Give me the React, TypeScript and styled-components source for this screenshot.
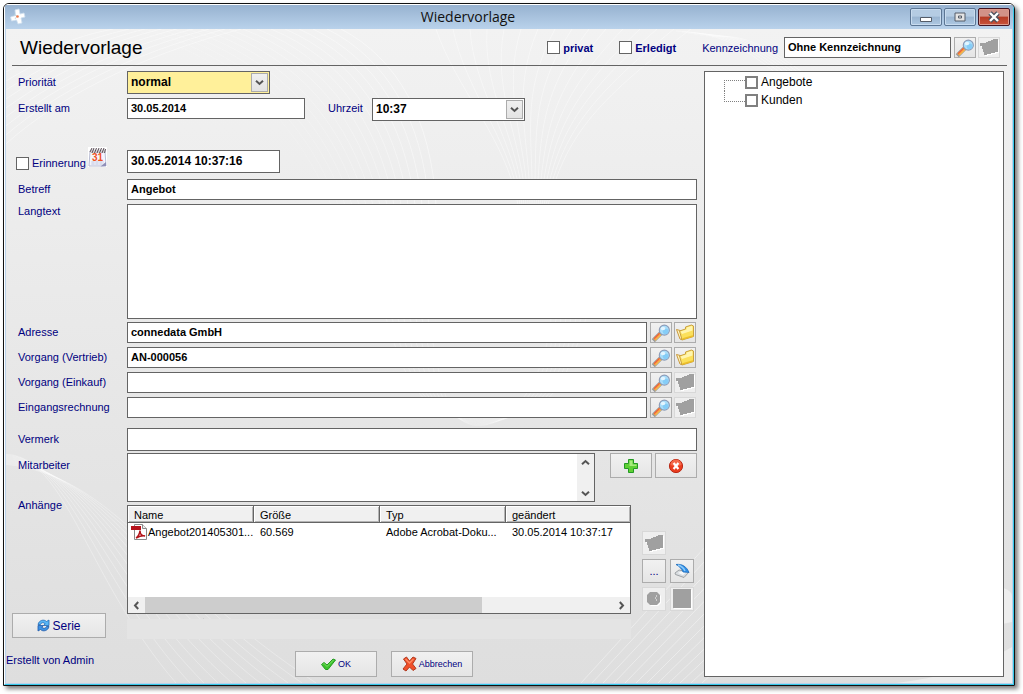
import React from "react";
import styled, { createGlobalStyle, css } from "styled-components";

const navy = "#000080";
const frame = "#646464";

const GlobalStyle = createGlobalStyle`
  * { box-sizing: border-box; }
  body {
    margin: 0;
    background: #fff;
    font-family: "Liberation Sans", Arial, sans-serif;
    font-size: 11px;
    line-height: 14px;
    color: ${navy};
  }
  button, input, select, textarea { font: inherit; color: inherit; margin: 0; }
`;

/* ---------- window frame ---------- */

const Desktop = styled.div`
  min-height: 100vh;
  padding: 3px 8px 8px 3px;
  display: flex;
`;

const WindowFrame = styled.main`
  flex: 1;
  display: flex;
  border: 1px solid #111;
  border-radius: 6px 6px 0 0;
  box-shadow: 3px 3px 4px rgba(0, 0, 0, 0.5);
  overflow: hidden;
`;

const InnerFrame = styled.div`
  flex: 1;
  min-width: 0;
  display: flex;
  flex-direction: column;
  border: 1px solid;
  border-color: #fff #35c8e8 #35c8e8 #fff;
`;

const TitleBar = styled.header`
  height: 24px;
  display: flex;
  align-items: center;
  gap: 2px;
  padding: 0 3px 0 4px;
  background: linear-gradient(#97b2d0, #b9d2eb);
`;

const WindowTitle = styled.div`
  flex: 1;
  text-align: center;
  font-family: "Open Sans", "Noto Sans", sans-serif;
  font-size: 14px;
  line-height: 20px;
  color: #111;
`;

const CaptionButton = styled.button<{ $close?: boolean }>`
  width: 32px;
  height: 18px;
  padding: 0;
  display: flex;
  align-items: center;
  justify-content: center;
  border: 1px solid ${(p) => (p.$close ? "#431422" : "#5c7694")};
  border-radius: 2px;
  box-shadow: inset 0 0 0 1px ${(p) => (p.$close ? "#dd9a8c" : "#c9dcef")};
  background: ${(p) =>
    p.$close
      ? "linear-gradient(#d29187 0 45%, #b53a24 50%, #c9543c)"
      : "linear-gradient(#b5cce3 0 45%, #9ab5d1 50%, #aec8e2)"};
`;

const Client = styled.div`
  flex: 1;
  position: relative;
  display: flex;
  flex-direction: column;
  border: 1px solid #b9d2eb;
  border-top: 0;
  background: linear-gradient(#f2f2f2, #ebebeb 35%, #dedede);
`;

const Backdrop = styled.svg`
  position: absolute;
  inset: 0;
  width: 100%;
  height: 100%;
`;

/* ---------- header ---------- */

const HeaderBar = styled.div`
  position: relative;
  height: 37px;
  margin: 0 5px 0 6px;
  padding: 1px 7px 0 8px;
  display: flex;
  align-items: center;
  border-bottom: 1px solid ${frame};
`;

const Heading = styled.h1`
  flex: 1;
  margin: 0;
  font-size: 19px;
  line-height: 22px;
  font-weight: normal;
  color: #000;
`;

const CheckLabel = styled.label<{ $bold?: boolean }>`
  display: flex;
  align-items: center;
  gap: 3px;
  font-weight: ${(p) => (p.$bold ? "bold" : "normal")};
`;

const HeaderChecks = styled.div`
  display: flex;
  gap: 26px;
  margin-right: 26px;
`;

const MarkLabel = styled.label`
  margin-right: 6px;
`;

const CheckBox = styled.input<{ $tree?: boolean }>`
  appearance: none;
  flex: none;
  width: 13px;
  height: 13px;
  background: #fff;
  border: ${(p) => (p.$tree ? "2px solid #808080" : `1px solid ${frame}`)};
  &:checked { background: ${navy}; box-shadow: inset 0 0 0 2px #fff; }
`;

/* ---------- form controls ---------- */

const fieldText = css<{ $large?: boolean }>`
  font-size: ${(p) => (p.$large ? "12px" : "11px")};
  font-weight: bold;
  color: #000;
`;

const TextField = styled.input<{ $large?: boolean; $tall?: boolean; $width?: number }>`
  ${fieldText}
  ${(p) => (p.$width ? `width: ${p.$width}px; flex: none;` : "flex: 1; min-width: 0;")}
  height: ${(p) => (p.$tall ? "23px" : "21px")};
  padding: 0 3px 1px;
  background: #fff;
  border: 1px solid ${frame};
  border-radius: 0;
`;

const LongText = styled.textarea`
  ${fieldText}
  flex: 1;
  min-width: 0;
  height: 115px;
  padding: 3px;
  resize: none;
  background: #fff;
  border: 1px solid ${frame};
`;

const SelectBox = styled.div<{ $width: number; $tone?: string }>`
  width: ${(p) => p.$width}px;
  height: 23px;
  display: grid;
  align-items: center;
  background: ${(p) => p.$tone || "#fff"};
  border: 1px solid ${frame};
  select {
    ${fieldText}
    font-size: 12px;
    grid-area: 1 / 1;
    width: 100%;
    height: 21px;
    padding: 0 20px 2px 3px;
    appearance: none;
    background: transparent;
    border: 0;
  }
`;

const DropMark = styled.span`
  grid-area: 1 / 1;
  justify-self: end;
  width: 17px;
  height: 19px;
  margin-right: 1px;
  display: flex;
  align-items: center;
  justify-content: center;
  pointer-events: none;
  border: 1px solid #acacac;
  background: linear-gradient(#f0f0f0, #e3e3e3);
`;

const PushButton = styled.button<{ $w: number; $h: number; $size?: number }>`
  flex: none;
  width: ${(p) => p.$w}px;
  height: ${(p) => p.$h}px;
  padding: 0;
  display: flex;
  align-items: center;
  justify-content: center;
  gap: 2px;
  font-size: ${(p) => p.$size || 11}px;
  color: ${navy};
  border: 1px solid #acacac;
  border-radius: 0;
  background: linear-gradient(#f1f1f1, #e5e5e5);
  &:disabled { border-color: #d8d8d8; background: #efefef; }
`;

/* ---------- form layout ---------- */

const Content = styled.div`
  position: relative;
  flex: 1;
  display: flex;
  gap: 7px;
  padding: 5px 8px 6px 0;
`;

const FormColumn = styled.div`
  flex: 1;
  min-width: 0;
  display: flex;
  flex-direction: column;
`;

const Row = styled.div<{ $gap?: number; $align?: string }>`
  display: flex;
  align-items: ${(p) => p.$align || "center"};
  margin-top: ${(p) => p.$gap || 0}px;
`;

const LabelCell = styled.div`
  flex: none;
  width: 121px;
  padding: 0 0 2px 12px;
  display: flex;
  align-items: center;
`;

const ReminderCell = styled(LabelCell)`
  height: 26px;
  padding: 0 0 0 10px;
  gap: 2px;
  align-items: flex-start;
  > label { margin-top: 9px; }
`;

const TimeLabel = styled.label`
  width: 44px;
  margin-left: 23px;
`;

const TimeRow = styled(Row)`
  align-items: flex-start;
  > ${LabelCell}, > ${TimeLabel} { line-height: 21px; }
`;

const IconPair = styled.div`
  display: flex;
  gap: 2px;
  margin-left: 3px;
`;

const FieldIcons = styled(IconPair)`
  margin-right: 1px;
`;

const LowerArea = styled.div`
  display: flex;
  margin-top: 2px;
`;

const LowerLabels = styled.div`
  flex: none;
  width: 121px;
  padding: 5px 0 1px 6px;
  display: flex;
  flex-direction: column;
  gap: 26px;
  > label, > span { padding-left: 6px; }
  > button { margin-top: auto; }
`;

const LowerFields = styled.div`
  flex: 1;
  min-width: 0;
  display: flex;
  flex-direction: column;
  gap: 3px;
`;

const StaffRow = styled.div`
  display: flex;
  align-items: flex-start;
`;

const StaffBox = styled.div`
  flex: 1;
  min-width: 0;
  height: 49px;
  display: flex;
  background: #fff;
  border: 1px solid ${frame};
  textarea {
    ${fieldText}
    flex: 1;
    min-width: 0;
    padding: 3px;
    border: 0;
    resize: none;
    overflow: hidden;
    background: #fff;
  }
`;

const ScrollColumn = styled.div`
  width: 17px;
  display: flex;
  flex-direction: column;
  justify-content: space-between;
  background: #f0f0f0;
`;

const ScrollButton = styled.button`
  width: 17px;
  height: 16px;
  padding: 0;
  display: flex;
  align-items: center;
  justify-content: center;
  border: 0;
  background: #f0f0f0;
`;

const StaffButtons = styled.div`
  display: flex;
  gap: 3px;
  margin-left: 15px;
`;

const AttachRow = styled.div`
  display: flex;
`;

const AttachColumn = styled.div`
  flex: 1;
  min-width: 0;
  display: flex;
  flex-direction: column;
  gap: 5px;
`;

const AttachBox = styled.div`
  height: 109px;
  display: flex;
  flex-direction: column;
  justify-content: space-between;
  background: #fff;
  border: 1px solid ${frame};
`;

const FileTable = styled.table`
  width: 100%;
  table-layout: fixed;
  border-collapse: separate;
  border-spacing: 0;
  color: #000;
  th {
    width: 126px;
    height: 17px;
    padding: 1px 0 0 6px;
    font-weight: normal;
    text-align: left;
    line-height: 14px;
    background: #f0f0f0;
    border-right: 1px solid ${frame};
    border-bottom: 1px solid ${frame};
    box-shadow: inset 1px 1px 0 #fff, inset -1px -1px 0 #b4b4b4;
  }
  th:last-child { width: auto; border-right: 0; }
  td {
    height: 17px;
    padding: 0 0 0 6px;
    line-height: 16px;
    white-space: nowrap;
  }
  td:first-child { padding-left: 3px; }
`;

const FileName = styled.span`
  display: flex;
  gap: 1px;
`;

const ScrollTrack = styled.div`
  height: 16px;
  display: flex;
  background: #f0f0f0;
`;

const ScrollRail = styled.div`
  flex: 1;
`;

const ScrollThumb = styled.div`
  width: 72%;
  height: 16px;
  background: #cdcdcd;
`;

const StatusStrip = styled.div`
  height: 20px;
  background: #e4e4e4;
`;

const AttachTools = styled.div`
  flex: none;
  width: 66px;
  padding: 26px 3px 0 11px;
  display: grid;
  grid-template-columns: 24px 24px;
  grid-auto-rows: 24px;
  gap: 4px;
  > button:first-child { grid-column: 1 / 3; }
`;

const Footer = styled.div`
  display: flex;
  margin-top: auto;
  gap: 14px;
`;

const CreatedBy = styled.div`
  width: 275px;
  padding-top: 2px;
`;

/* ---------- tree ---------- */

const TreePanel = styled.ul`
  flex: none;
  width: 300px;
  margin: 0;
  padding: 1px 0 0 19px;
  list-style: none;
  background: #fff;
  border: 1px solid ${frame};
  font-size: 12px;
  color: #000;
`;

const TreeItem = styled.li<{ $last?: boolean }>`
  height: 18px;
  display: flex;
  align-items: center;
  &::before {
    content: "";
    width: 20px;
    height: 10px;
    align-self: ${(p) => (p.$last ? "flex-start" : "flex-end")};
    border-left: 1px dotted #808080;
    border-${(p) => (p.$last ? "bottom" : "top")}: 1px dotted #808080;
  }
`;

/* ---------- icons ---------- */

const Magnifier = () => (
  <svg width="20" height="19" viewBox="-1 -1 21 20" aria-hidden="true">
    <path d="M3 16 8.500 10.500" stroke="#9a9a9a" strokeWidth="4.600" strokeLinecap="square" />
    <path d="M2.600 16.600 9 10.200" stroke="#fbc04a" strokeWidth="3.200" />
    <path d="M2.200 15.600 8 9.800" stroke="#f0603a" strokeWidth="1.300" />
    <path d="m3 16.500 5.500-5.500" stroke="#f0603a" strokeWidth=".9" strokeDasharray="1.500 1.500" />
    <path d="m8.800 10.300 1.800-1.800" stroke="#5c5c78" strokeWidth="2.800" />
    <circle cx="13" cy="6.500" r="5.300" fill="#a9defa" stroke="#8d9cb8" strokeWidth="1.200" />
    <circle cx="14.300" cy="7.800" r="3" fill="#86cdf7" />
    <ellipse cx="11.600" cy="4.800" rx="2.400" ry="1.900" fill="#e3f5ff" />
  </svg>
);

const Folder = () => (
  <svg width="20" height="19" viewBox="0 0 20 19" aria-hidden="true">
    <path d="M1.500 6.500 5 16l2 .8V8z" fill="#fff6c4" stroke="#c9983a" />
    <path d="M4.500 8 10.500 6V4l6-2 2 1v10.500L7 17z" fill="#fbe05c" stroke="#c9a040" strokeLinejoin="round" />
    <path d="M5.500 8.500 11.500 6.500V4.500l5-1.500 1 .5v4L7 11z" fill="#fff5b0" />
    <path d="m7.500 16 10.500-3" stroke="#ecbf2a" strokeWidth="1.400" />
  </svg>
);

const folderShape = "M1 5h6V4h2V3h3V2h2V1h5v13h-3v1h-4v1H8v1H5v-3H4v-3H3V8H1z";

const FolderOff = () => (
  <svg width="20" height="19" viewBox="0 0 20 19" aria-hidden="true">
    <path d={folderShape} fill="#fff" transform="translate(1 1)" />
    <path d={folderShape} fill="#a0a0a0" />
  </svg>
);

const Chevron = ({ d = "down" }: { d?: "down" | "up" | "left" | "right" }) => {
  const turn = { down: 0, left: 90, up: 180, right: 270 }[d];
  return (
    <svg width="9" height="9" viewBox="0 0 9 9" aria-hidden="true">
      <path d="M1 2.800 4.500 6 8 2.800" fill="none" stroke="#555" strokeWidth="2" transform={`rotate(${turn} 4.5 4.5)`} />
    </svg>
  );
};

const AppMark = () => (
  <svg width="17" height="18" viewBox="0 0 17 18" aria-hidden="true">
    <path d="m6 2 4-1 1 5 4-1 1 4-4 1 1 5-4 1-1.500-4-5 1-1-4 5-1.500z" fill="#fff" stroke="#cfe0ef" strokeWidth=".8" />
    <path d="M5 6.500 8 8l-2 3" fill="none" stroke="#b8d2dc" strokeWidth=".8" />
    <circle cx="8.500" cy="8.500" r="1.300" fill="#ef7d4f" />
  </svg>
);

const CalendarMark = () => (
  <svg width="19" height="20" viewBox="0 0 19 20" aria-hidden="true">
    <path d="M0 0h19v20H0z" fill="#fff" />
    <path d="M2 4h15l1 15H1z" fill="#f4f5fc" stroke="#b9bdd4" />
    <path d="M2 2.500h15.500V6H1.500z" fill="#d8d4d8" />
    <path d="M2 5l2-4M4 6l2-5M6.500 6l2-5M9 6l2-5M11.500 6l2-5M14 6l2-5M16.500 6l1-4" fill="none" stroke="#5c5058" strokeWidth="1" />
    <path d="M3 15h13M3 17h13M5 14v4M9 14v4M13 14v4" stroke="#d0d4e8" />
    <path d="M12.500 19.500 18 15v4z" fill="#8f8fb8" />
    <text x="9.500" y="13.500" textAnchor="middle" fontFamily="Liberation Sans, sans-serif" fontSize="10" fontWeight="bold" fill="#f0501e">31</text>
  </svg>
);

const PlusMark = () => (
  <svg width="16" height="16" viewBox="0 0 16 16" aria-hidden="true">
    <path d="M5.500 1.500h5v4h4v5h-4v4h-5v-4h-4v-5h4z" fill="#5fd035" stroke="#239a23" strokeLinejoin="round" />
    <path d="M6.500 8V2.500h3v4h4V8z" fill="#a6ec7c" />
  </svg>
);

const StopMark = () => (
  <svg width="16" height="16" viewBox="0 0 16 16" aria-hidden="true">
    <circle cx="8" cy="8" r="6.600" fill="#ea3d1f" stroke="#b92a18" />
    <path d="M2.500 7a5.500 5.500 0 0 1 11 0C10 8.500 6 8.500 2.500 7z" fill="#f4694a" />
    <path d="m5.600 5 4.800 6M10.400 5l-4.800 6" stroke="#fff" strokeWidth="2.200" />
  </svg>
);

const CheckMark = () => (
  <svg width="15" height="14" viewBox="0 0 15 14" aria-hidden="true">
    <path d="M.5 7.500 3 5.500l3 2.500 6-6 2.500 1L7 12.500H4.500z" fill="#3cc22c" stroke="#259a22" strokeLinejoin="round" />
    <path d="M2 7.500 3 6.500l3 3L12.500 3" fill="none" stroke="#7fe065" />
  </svg>
);

const CrossMark = () => (
  <svg width="15" height="16" viewBox="0 0 15 16" aria-hidden="true">
    <path d="m1.500 3 3-2L7.500 5 11 1l3 1.500L10.500 8l3.500 4.500-3 2L7.500 11l-3.500 4-3-2 4-5z" fill="#f1502a" stroke="#b03a20" strokeLinejoin="round" />
    <path d="m3.500 3 4 4 4-4" fill="none" stroke="#ff8a62" strokeWidth="1.400" />
  </svg>
);

const SeriesMark = () => (
  <svg width="13" height="13" viewBox="0 0 13 13" aria-hidden="true">
    <path d="M1 5.500C2 1 7 0 9.500 2.500L12 1v5.500H6.500l1.700-1.800C6 3 4 3.500 3.500 5.500z" fill="#58b6f6" stroke="#1f69b8" strokeWidth=".8" />
    <path d="M12 7.500C11 12 6 13 3.500 10.500L1 12V6.500h5.500L4.800 8.300C7 10 9 9.500 9.500 7.500z" fill="#3d92e4" stroke="#1f59a8" strokeWidth=".8" />
  </svg>
);

const PdfMark = () => (
  <svg width="16" height="16" viewBox="0 0 16 16" aria-hidden="true">
    <path d="M3.500.5h8l4 4v11h-12z" fill="#fff" stroke="#8a8a8a" />
    <path d="M11.500.5v4h4" fill="#eee" stroke="#8a8a8a" />
    <path d="M0 2h10v4H0z" fill="#b5121b" />
    <path d="M5 14c2-1 4-5 4-7.500C9 10 11 12 14 12c-3-1-6 .5-9 2z" fill="none" stroke="#b3141a" strokeWidth="1.500" />
  </svg>
);

const ScannerMark = () => (
  <svg width="16" height="16" viewBox="0 0 16 16" aria-hidden="true">
    <path d="m1 10 4-3 10 2-5 5.500L1.500 11.500z" fill="#d9dde0" stroke="#8b9094" strokeWidth=".8" />
    <path d="m4 10 3-1.500 5 1-3 2.500z" fill="#f7f9fb" />
    <path d="M2 1.500C8 .5 13 4 15 9.500L9 9C8 6 5.500 3.500 2 1.500z" fill="#2f8fe6" stroke="#1c66b4" strokeWidth=".7" />
    <path d="M4 2c3 1 6 3.500 7 6" fill="none" stroke="#8fccfa" strokeWidth="1.400" />
  </svg>
);

const ClockOff = () => (
  <svg width="18" height="18" viewBox="0 0 18 18" aria-hidden="true">
    <path d="M6 3h7l3 3v7l-3 3H6l-3-3V6z" fill="#fff" />
    <path d="M5 2h7l3 3v7l-3 3H5l-3-3V5z" fill="#a0a0a0" />
    <path d="M11 6h1M10 8h1M11 10h1" stroke="#fff" />
  </svg>
);

const SquareOff = () => (
  <svg width="20" height="20" viewBox="0 0 20 20" aria-hidden="true">
    <path d="M2 1h18v19H2z" fill="#fff" />
    <path d="M1 0h18v19H1z" fill="#a0a0a0" />
  </svg>
);

/* Faint light curves behind the form */
const range = (n: number) => Array.from({ length: n }, (_, i) => i);

const Waves = () => (
  <Backdrop viewBox="0 0 1006 655" preserveAspectRatio="none" aria-hidden="true">
    <g fill="none" stroke="#fff" strokeOpacity=".4">
      {range(9).map((i) => (
        <path key={`a${i}`} d={`M0 ${115 - i * 9}C${50 + i * 2} ${70 - i * 8} ${130 - i * 5} ${28 - i * 3} ${235 - i * 16} 0`} />
      ))}
      {range(16).map((i) => (
        <path key={`b${i}`} strokeOpacity={0.45 - i * 0.02} d={`M${335 - i * 14} 0C${392 - i * 11} 30 ${425 - i * 9} 90 ${430 - i * 7} 176`} />
      ))}
      {range(16).map((i) => (
        <path key={`c${i}`} d={`M${430 + i * 17} 0C${450 + i * 9} ${60 + i} ${500 + i * 4} 110 ${512 + i * 2} 176`} />
      ))}
      {range(11).map((i) => (
        <path key={`d${i}`} strokeOpacity=".3" d={`M0 ${426 + i}C${60 + i * 5} ${428 + i * 2} ${80 + i * 7} 550 ${170 + i * 14} 655`} />
      ))}
      {range(12).map((i) => (
        <path key={`e${i}`} d={`M${575 + i * 11} 655L${698 + i * 11} ${520 + i * 2}`} />
      ))}
      {range(8).map((i) => (
        <path key={`f${i}`} strokeOpacity=".25" d={`M${380 + i * 6} 290C${400 + i * 5} 350 ${410 + i * 4} ${390 + i} ${480 - i} ${390 + i}S${560 - i * 3} 350 ${580 - i * 5} 290`} />
      ))}
      {range(7).map((i) => (
        <path key={`g${i}`} strokeOpacity=".35" d={`M${670 + i * 6} ${2 + i}C${720 + i * 4} 4 ${740 + i * 4} 20 ${790 + i * 5} 60`} />
      ))}
    </g>
    <path d="M138 600c15 14 38 12 60-10" fill="none" stroke="#cfcfcf" />
    <path d="M998 560q8 3 8 8v26l-10 2z" fill="#eee" />
    <path d="M890 655q70-8 116-36v36z" fill="#ececec" />
  </Backdrop>
);

const links = [
  { id: "adresse", label: "Adresse", value: "connedata GmbH", gap: 3 },
  { id: "vertrieb", label: "Vorgang (Vertrieb)", value: "AN-000056", gap: 4 },
  { id: "einkauf", label: "Vorgang (Einkauf)", value: "", gap: 4 },
  { id: "rechnung", label: "Eingangsrechnung", value: "", gap: 4 },
];

export default function App() {
  return (
    <Desktop>
      <GlobalStyle />
      <WindowFrame>
        <InnerFrame>
          <TitleBar>
            <AppMark />
            <WindowTitle>Wiedervorlage</WindowTitle>
            <CaptionButton aria-label="Minimieren">
              <svg width="12" height="12"><path d="M.5 6.500h11v4H.5z" fill="#fff" stroke="#545c68" /></svg>
            </CaptionButton>
            <CaptionButton aria-label="Maximieren">
              <svg width="12" height="10"><path d="M1 1h10v8H1zM4.500 4h3v2h-3z" fill="#e4e4e4" stroke="#545c68" /></svg>
            </CaptionButton>
            <CaptionButton $close aria-label="Schließen">
              <svg width="14" height="12">
                <path d="m3 2 8 8m0-8-8 8" stroke="#4a4f5c" strokeWidth="4.600" />
                <path d="m3 2 8 8m0-8-8 8" stroke="#fff" strokeWidth="2.400" />
              </svg>
            </CaptionButton>
          </TitleBar>

          <Client>
            <Waves />
            <HeaderBar>
              <Heading>Wiedervorlage</Heading>
              <HeaderChecks>
                <CheckLabel $bold><CheckBox type="checkbox" />privat</CheckLabel>
                <CheckLabel $bold><CheckBox type="checkbox" />Erledigt</CheckLabel>
              </HeaderChecks>
              <MarkLabel htmlFor="kennzeichnung">Kennzeichnung</MarkLabel>
              <TextField id="kennzeichnung" $width={167} defaultValue="Ohne Kennzeichnung" />
              <IconPair>
                <PushButton $w={22} $h={21} aria-label="Suchen"><Magnifier /></PushButton>
                <PushButton $w={22} $h={21} disabled aria-label="Öffnen"><FolderOff /></PushButton>
              </IconPair>
            </HeaderBar>

            <Content>
              <FormColumn>
                <Row>
                  <LabelCell><label htmlFor="prio">Priorität</label></LabelCell>
                  <SelectBox $width={143} $tone="#fff09a">
                    <select id="prio"><option>normal</option></select>
                    <DropMark><Chevron /></DropMark>
                  </SelectBox>
                </Row>
                <TimeRow $gap={4}>
                  <LabelCell><label htmlFor="erstellt">Erstellt am</label></LabelCell>
                  <TextField id="erstellt" $width={178} defaultValue="30.05.2014" />
                  <TimeLabel htmlFor="zeit">Uhrzeit</TimeLabel>
                  <SelectBox $width={153}>
                    <select id="zeit"><option>10:37</option></select>
                    <DropMark><Chevron /></DropMark>
                  </SelectBox>
                </TimeRow>
                <Row $gap={26} $align="flex-end">
                  <ReminderCell>
                    <CheckLabel><CheckBox type="checkbox" />Erinnerung</CheckLabel>
                    <CalendarMark />
                  </ReminderCell>
                  <TextField $large $tall $width={153} aria-label="Erinnerung am" defaultValue="30.05.2014 10:37:16" />
                </Row>
                <Row $gap={6}>
                  <LabelCell><label htmlFor="betreff">Betreff</label></LabelCell>
                  <TextField id="betreff" defaultValue="Angebot" />
                </Row>
                <Row $gap={4} $align="flex-start">
                  <LabelCell><label htmlFor="lang">Langtext</label></LabelCell>
                  <LongText id="lang" />
                </Row>
                {links.map((l, i) => (
                  <Row key={l.id} $gap={l.gap}>
                    <LabelCell><label htmlFor={l.id}>{l.label}</label></LabelCell>
                    <TextField id={l.id} defaultValue={l.value} />
                    <FieldIcons>
                      <PushButton $w={22} $h={21} aria-label="Suchen"><Magnifier /></PushButton>
                      <PushButton $w={22} $h={21} disabled={i > 1} aria-label="Öffnen">
                        {i > 1 ? <FolderOff /> : <Folder />}
                      </PushButton>
                    </FieldIcons>
                  </Row>
                ))}
                <Row $gap={10}>
                  <LabelCell><label htmlFor="vermerk">Vermerk</label></LabelCell>
                  <TextField id="vermerk" $tall />
                </Row>

                <LowerArea>
                  <LowerLabels>
                    <label htmlFor="mitarbeiter">Mitarbeiter</label>
                    <span id="anhaenge">Anhänge</span>
                    <PushButton $w={94} $h={25} $size={12}><SeriesMark />Serie</PushButton>
                  </LowerLabels>
                  <LowerFields>
                    <StaffRow>
                      <StaffBox>
                        <textarea id="mitarbeiter" />
                        <ScrollColumn>
                          <ScrollButton aria-label="Nach oben"><Chevron d="up" /></ScrollButton>
                          <ScrollButton aria-label="Nach unten"><Chevron /></ScrollButton>
                        </ScrollColumn>
                      </StaffBox>
                      <StaffButtons>
                        <PushButton $w={42} $h={25} aria-label="Hinzufügen"><PlusMark /></PushButton>
                        <PushButton $w={42} $h={25} aria-label="Entfernen"><StopMark /></PushButton>
                      </StaffButtons>
                    </StaffRow>
                    <AttachRow>
                      <AttachColumn>
                        <AttachBox>
                          <FileTable aria-labelledby="anhaenge">
                            <thead>
                              <tr><th>Name</th><th>Größe</th><th>Typ</th><th>geändert</th></tr>
                            </thead>
                            <tbody>
                              <tr>
                                <td><FileName><PdfMark />Angebot201405301...</FileName></td>
                                <td>60.569</td>
                                <td>Adobe Acrobat-Doku...</td>
                                <td>30.05.2014 10:37:17</td>
                              </tr>
                            </tbody>
                          </FileTable>
                          <ScrollTrack>
                            <ScrollButton aria-label="Nach links"><Chevron d="left" /></ScrollButton>
                            <ScrollRail><ScrollThumb /></ScrollRail>
                            <ScrollButton aria-label="Nach rechts"><Chevron d="right" /></ScrollButton>
                          </ScrollTrack>
                        </AttachBox>
                        <StatusStrip />
                      </AttachColumn>
                      <AttachTools>
                        <PushButton $w={24} $h={24} disabled aria-label="Öffnen"><FolderOff /></PushButton>
                        <PushButton $w={24} $h={24}>...</PushButton>
                        <PushButton $w={24} $h={24} aria-label="Scannen"><ScannerMark /></PushButton>
                        <PushButton $w={24} $h={24} disabled aria-label="Verlauf"><ClockOff /></PushButton>
                        <PushButton $w={24} $h={24} disabled aria-label="Vorschau"><SquareOff /></PushButton>
                      </AttachTools>
                    </AttachRow>
                  </LowerFields>
                </LowerArea>

                <Footer>
                  <CreatedBy>Erstellt von Admin</CreatedBy>
                  <PushButton $w={82} $h={26} $size={9}><CheckMark />OK</PushButton>
                  <PushButton $w={82} $h={26} $size={9}><CrossMark />Abbrechen</PushButton>
                </Footer>
              </FormColumn>

              <TreePanel>
                <TreeItem><CheckLabel><CheckBox $tree type="checkbox" />Angebote</CheckLabel></TreeItem>
                <TreeItem $last><CheckLabel><CheckBox $tree type="checkbox" />Kunden</CheckLabel></TreeItem>
              </TreePanel>
            </Content>
          </Client>
        </InnerFrame>
      </WindowFrame>
    </Desktop>
  );
}
